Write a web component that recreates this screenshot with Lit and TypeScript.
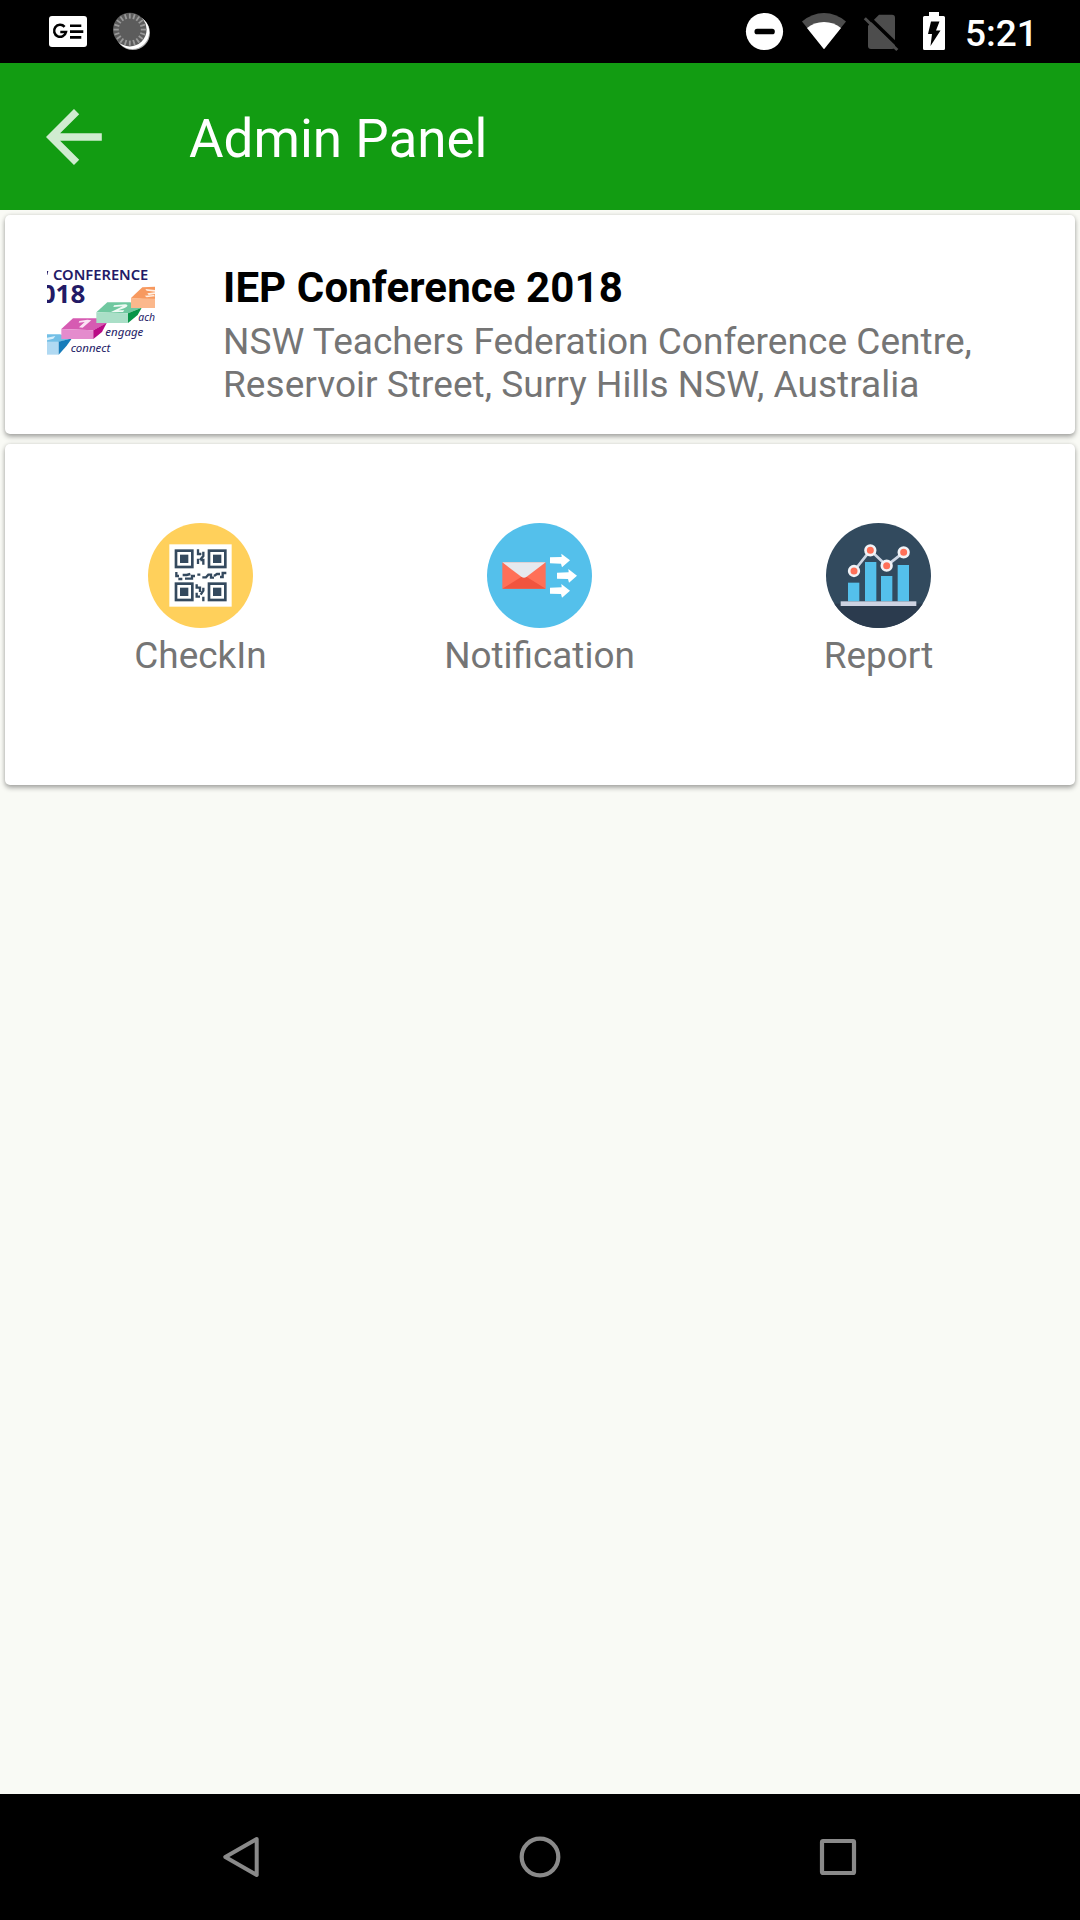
import { LitElement, html, css, svg } from "lit";
import { customElement } from "lit/decorators.js";

const ticks = Array.from({ length: 20 }, (_, i) => i * 18);

const newsIcon = svg`<svg class="news" width="38" height="31" viewBox="0 0 38 31">
  <rect width="38" height="31" rx="3" fill="#fff"/>
  <path d="M15.6 10.8 A6 6 0 1 0 17 16 L11.3 16" fill="none" stroke="#000" stroke-width="2.5"/>
  <path d="M21 9.7H32.3M21 15.6H34.3M21 21.4H32.3" stroke="#000" stroke-width="2.6"/>
</svg>`;

const spinnerIcon = svg`<svg class="spin" width="38" height="40" viewBox="0 0 38 40">
  <circle cx="19.8" cy="20.8" r="17.2" fill="#aaa"/>
  <circle cx="19.2" cy="20.1" r="17" fill="#fff"/>
  <circle cx="16.8" cy="17.6" r="16.8" fill="#5c5c5c"/>
  ${ticks.map((a) => svg`<path d="M16.8 1.5V6.6" stroke="#999" stroke-width="1.8" transform="rotate(${a} 16.8 17.6)"/>`)}
</svg>`;

/* Right side indicators share one strip that starts at x = 744 */
const indicators = svg`<svg class="indicators" width="204" height="63" viewBox="744 0 204 63">
  <circle cx="764.5" cy="31.5" r="18.6" fill="#fff"/>
  <rect x="754.5" y="28.7" width="20.3" height="5.6" rx="2.6" fill="#000"/>
  <path d="M824 49 L802 21.5 Q812 13 824 13 Q836 13 846 21.5 Z" fill="#4d4d4d"/>
  <path d="M824 49.3 L807 28 Q814 22 824 22 Q834 22 841 28 Z" fill="#fff"/>
  <path d="M879 14.8H892Q895 14.8 895 17.8V46Q895 49 892 49H871Q868 49 868 46V25.8Z" fill="#4d4d4d"/>
  <path d="M867 15.5L900 47.5" stroke="#000" stroke-width="3.6"/>
  <path d="M864.8 18.2L897.3 50" stroke="#4d4d4d" stroke-width="3"/>
  <path d="M929 12H939V16H943.5Q945 16 945 17.5V48.5Q945 50 943.5 50H924.5Q923 50 923 48.5V17.5Q923 16 924.5 16H929Z" fill="#fff"/>
  <path d="M931 21.5H939.5L936 30.5H940.5L930.5 46L932 34H928Z" fill="#000"/>
</svg>`;

const backIcon = svg`<svg width="56" height="56" viewBox="0 0 56 56">
  <path d="M55.8 28H5.5M30.6 2.6L5.2 28L30.6 53.4" fill="none" stroke="#d0ecd0" stroke-width="7.4"/>
</svg>`;

const logo = svg`<svg class="logo" width="108" height="90" viewBox="51 50 324 270">
  <path d="M51 62h4l-3 12h-1z" fill="#231a66"/>
  <text class="lt semi" x="69" y="90" font-size="42" textLength="286" lengthAdjust="spacingAndGlyphs">CONFERENCE</text>
  <text class="lt bold" x="32" y="157" font-size="75" textLength="134" lengthAdjust="spacingAndGlyphs">018</text>
  <path d="M51 252H90L126 264L86 275H51Z" fill="#72bfe6"/>
  <path d="M51 274H86V313H51Z" fill="#b0d9f2"/>
  <path d="M86 274L126 264L110 286L86 313Z" fill="#167cba"/>
  <path d="M51 262L76 257L70 265L51 270Z" fill="#d8effb"/>
  <path d="M129 204L203 204L230 219L190 240L94 236Z" fill="#d65bb2"/>
  <path d="M94 236L190 240V266H94Z" fill="#e48bcd"/>
  <path d="M190 240L230 218L216 245L190 266Z" fill="#b90b85"/>
  <path d="M148 212L172 208L184 210L158 232L147 231L164 215L146 217Z" fill="#fbe3f4"/>
  <path d="M232 156H301L335 172L294 189L199 186Z" fill="#70c8a0"/>
  <path d="M199 186L294 189V218H199Z" fill="#aadfc7"/>
  <path d="M294 189L335 172L323 194L294 218Z" fill="#079447"/>
  <path d="M252 165L286 162Q300 165 284 173L265 180H283L279 185H243L278 168L250 170Z" fill="#effaf4"/>
  <path d="M337 111L375 109V149L303 143Z" fill="#f7995f"/>
  <path d="M303 143L375 145V173H303Z" fill="#fbb88c"/>
  <path d="M346 116L375 119V124L350 121ZM352 129L375 126V131L356 134ZM344 136L372 134L375 138L350 141Z" fill="#fff0e4"/>
  <text class="lt it" x="325" y="213" font-size="35" textLength="50" lengthAdjust="spacingAndGlyphs">ach</text>
  <text class="lt it" x="226" y="256" font-size="35" textLength="114" lengthAdjust="spacingAndGlyphs">engage</text>
  <text class="lt it" x="122" y="305" font-size="35" textLength="119" lengthAdjust="spacingAndGlyphs">connect</text>
</svg>`;

const finder = (x: number, y: number) => svg`
  <rect x="${x + 4}" y="${y + 4}" width="49" height="49" fill="none" stroke="#34495e" stroke-width="8"/>
  <rect x="${x + 16}" y="${y + 16}" width="25" height="25" fill="#34495e"/>`;

const qrIcon = svg`<svg class="pic" viewBox="84 69 315 315">
  <circle cx="241.5" cy="226.5" r="157.5" fill="#ffd05b"/>
  <rect x="148" y="133" width="187" height="187" fill="#fff"/>
  ${finder(164, 148)}${finder(263, 148)}${finder(164, 247)}${finder(263, 247)}
  <path d="M234 148V162H244M250 155V168L240 180M234 176V192M241 180H250V194
    M169 216V228H177M175 237H187M188 225H200L211 222M195 236H216V228H225M232 224H241M247 232H258L265 224H273V233H282M282 228L291 222H300M300 231H308V219H319
    M230 253V263H240V276M250 263V272L242 284M230 278V290H240M250 290V304" fill="none" stroke="#34495e" stroke-width="7"/>
</svg>`;

const arrow = (x: number, y: number) => svg`
  <path transform="translate(${x} ${y})" d="M0 -9L35 -10L34 -20L60 0L36 21L33 10L0 9Z" fill="#fff"/>`;

const mailIcon = svg`<svg class="pic" viewBox="171 69 315 315">
  <circle cx="328.5" cy="226.5" r="157.5" fill="#54c0eb"/>
  <rect x="217" y="187" width="130" height="79" fill="#ff7058"/>
  <path d="M217 266L282 226L347 266Z" fill="#f1543f"/>
  <path d="M217 187H347L289 231Q282 236 275 231Z" fill="#e6e9ee"/>
  ${arrow(360, 181)}${arrow(381, 227)}${arrow(360, 272)}
</svg>`;

const points = [[162, 213], [211, 151], [260, 197], [311, 157]];
const bars = [[144, 248], [195, 186], [243, 228], [293, 195]];

const chartIcon = svg`<svg class="pic" viewBox="78 69 315 315">
  <defs><clipPath id="disc"><circle cx="235.5" cy="226.5" r="157.5"/></clipPath></defs>
  <g clip-path="url(#disc)">
    <rect x="78" y="69" width="315" height="315" fill="#324a5e"/>
    <rect x="78" y="311" width="315" height="80" fill="#2b3b4e"/>
  </g>
  ${bars.map(([x, y]) => svg`<rect x="${x}" y="${y}" width="34" height="${304 - y}" fill="#54c0eb"/>`)}
  <rect x="122" y="304" width="227" height="14" fill="#cdd2e1"/>
  <path d="M162 213L211 151L260 197L311 157" fill="none" stroke="#cdd6e4" stroke-width="8"/>
  ${points.map(([x, y]) => svg`<circle cx="${x}" cy="${y}" r="14.5" fill="#ff7058" stroke="#f1f3f7" stroke-width="8"/>`)}
</svg>`;

const actions = [
  { label: "CheckIn", icon: qrIcon },
  { label: "Notification", icon: mailIcon },
  { label: "Report", icon: chartIcon },
];

@customElement("app-root")
export class AppRoot extends LitElement {
  static styles = css`
    :host { display: flex; flex-direction: column; width: 1080px; height: 1920px; overflow: hidden;
      background: #f9faf5; font-family: Roboto, "Noto Sans", sans-serif; }
    * { box-sizing: border-box; }
    svg { display: block; flex: none; }
    .status { height: 63px; background: #000; display: flex; align-items: flex-start; padding: 0 47px 0 49px; flex: none; }
    .news { margin-top: 16px; }
    .spin { margin: 12px 0 0 26px; }
    .indicators { margin-left: auto; }
    .clock { color: #fff; font-size: 37px; font-weight: 500; line-height: 43px; margin: 12px 0 0 17px; width: 68px; white-space: nowrap; }
    .bar { height: 147px; background: #129c12; display: flex; align-items: center; padding: 1px 0 0 46px; flex: none; }
    .bar-title { color: #fff; font-size: 53px; font-weight: 400; line-height: 62px; margin: 0 0 0 87px; padding-top: 4px; }
    .content { flex: 1; padding: 5px 5px 0; display: flex; flex-direction: column; gap: 10px; }
    .card { background: #fff; border-radius: 5px; box-shadow: 0 3px 5px rgba(0,0,0,.3), 0 0 4px rgba(0,0,0,.13); }
    .event { height: 219px; display: flex; padding: 0 0 0 42px; }
    .logo { margin-top: 52px; overflow: hidden; }
    .details { margin-left: 68px; padding-top: 48px; }
    .name { margin: 0; color: #000; font-size: 42px; font-weight: 700; line-height: 49px; letter-spacing: .1px; white-space: nowrap; }
    .place { margin: 8px 0 0; width: 800px; color: #757575; font-size: 37px; line-height: 43px; letter-spacing: .04px; }
    .actions { height: 341px; display: grid; grid-template-columns: repeat(3, 339px); padding: 79px 0 0 26px; }
    .action { display: flex; flex-direction: column; align-items: center; gap: 6px; }
    .pic { width: 105px; height: 105px; }
    .label { color: #757575; font-size: 36.9px; line-height: 43px; }
    .nav { height: 126px; background: #000; display: grid; grid-template-columns: repeat(3, 298px); justify-content: center; align-items: center; justify-items: center; flex: none; }
    .lt { font-family: "Noto Sans", "Open Sans", sans-serif; fill: #231a66; }
    .semi { font-weight: 600; }
    .bold { font-weight: 700; }
    .it { font-style: italic; font-weight: 400; }
  `;

  render() {
    return html`
      <div class="status">${newsIcon}${spinnerIcon}${indicators}<span class="clock">5:21</span></div>
      <header class="bar">${backIcon}<h1 class="bar-title">Admin Panel</h1></header>
      <main class="content">
        <section class="card event">
          ${logo}
          <div class="details">
            <h2 class="name">IEP Conference 2018</h2>
            <p class="place">NSW Teachers Federation Conference Centre,<br />Reservoir Street, Surry Hills NSW, Australia</p>
          </div>
        </section>
        <section class="card actions">
          ${actions.map((a) => html`<div class="action">${a.icon}<span class="label">${a.label}</span></div>`)}
        </section>
      </main>
      <nav class="nav">
        <svg width="42" height="42" viewBox="0 0 42 42"><path d="M35.7 3L4.3 21L35.7 39Z" fill="none" stroke="#8a8a8a" stroke-width="4" stroke-linejoin="round"/></svg>
        <svg width="42" height="42" viewBox="0 0 42 42"><circle cx="21" cy="21" r="18.3" fill="none" stroke="#8a8a8a" stroke-width="4.2"/></svg>
        <svg width="42" height="42" viewBox="0 0 42 42"><rect x="5" y="5" width="32" height="32" rx="1" fill="none" stroke="#8a8a8a" stroke-width="4.2"/></svg>
      </nav>
    `;
  }
}
